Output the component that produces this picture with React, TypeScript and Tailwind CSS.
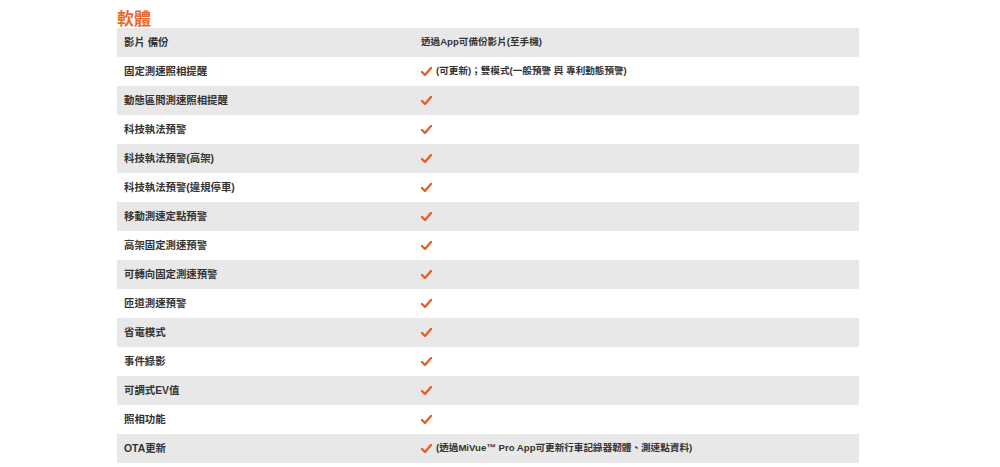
import React from 'react';

const rows: { name: string; check: boolean; note?: string }[] = [
  { name: '影片 備份', check: false, note: '透過App可備份影片(至手機)' },
  { name: '固定測速照相提醒', check: true, note: '(可更新)；雙模式(一般預警 與 專利動態預警)' },
  { name: '動態區間測速照相提醒', check: true },
  { name: '科技執法預警', check: true },
  { name: '科技執法預警(高架)', check: true },
  { name: '科技執法預警(違規停車)', check: true },
  { name: '移動測速定點預警', check: true },
  { name: '高架固定測速預警', check: true },
  { name: '可轉向固定測速預警', check: true },
  { name: '匝道測速預警', check: true },
  { name: '省電模式', check: true },
  { name: '事件錄影', check: true },
  { name: '可調式EV值', check: true },
  { name: '照相功能', check: true },
  { name: 'OTA更新', check: true, note: '(透過MiVue™ Pro App可更新行車記錄器韌體、測速點資料)' },
];

function Check() {
  return (
    <svg width="11" height="9" viewBox="0 0 11 9" className="shrink-0">
      <path d="M1 5 L4 8 L10 1" fill="none" stroke="#e2622a" strokeWidth="2.4" strokeLinecap="round" strokeLinejoin="round" />
    </svg>
  );
}

export default function App() {
  return (
    <div
      className="w-[1000px] h-[467px] bg-white overflow-hidden pl-[117px] pt-[8px]"
      style={{ fontFamily: '"Liberation Sans", "Noto Sans CJK TC", sans-serif' }}
    >
      <h2
        className="text-[17px] font-bold leading-[20px] text-[#e8692b]"
        style={{ fontFamily: '"Noto Sans CJK TC", sans-serif' }}
      >
        軟體
      </h2>
      <div className="w-[742px]">
        {rows.map((r, i) => (
          <div
            key={r.name}
            className={`flex h-[29px] items-center font-semibold text-[#333] ${i % 2 === 0 ? 'bg-[#e8e8e8]' : 'bg-white'}`}
          >
            <div className="w-[304px] pl-[7px] text-[10.4px]">{r.name}</div>
            <div className="flex items-center gap-[4px]">
              {r.check && <Check />}
              {r.note && <span className="text-[9.6px]">{r.note}</span>}
            </div>
          </div>
        ))}
      </div>
    </div>
  );
}
